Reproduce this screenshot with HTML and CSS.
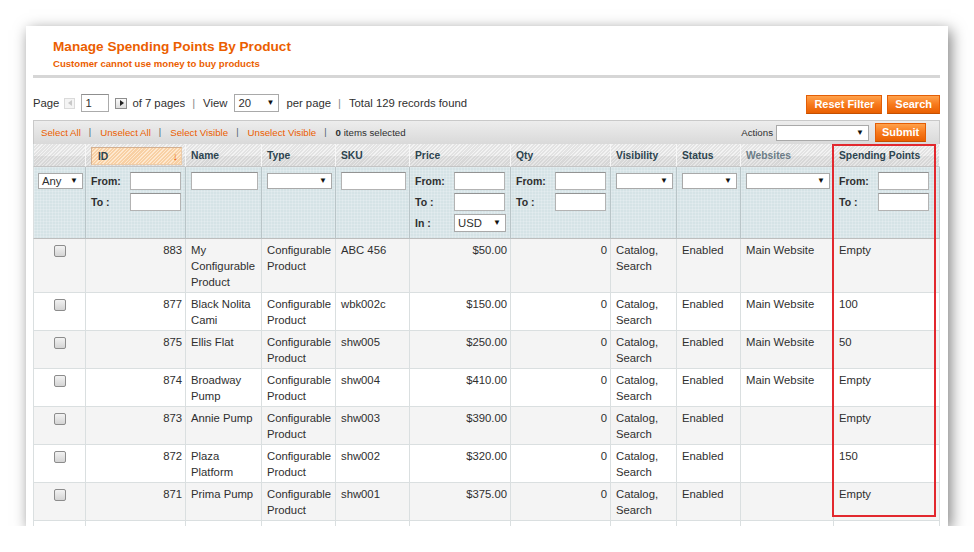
FILE: index.html
```html
<!DOCTYPE html>
<html>
<head>
<meta charset="utf-8">
<title>Manage Spending Points By Product</title>
<link rel="stylesheet" href="styles.css">
</head>
<body>
<div class="stage">
  <div class="card">
    <div class="content-header">
      <h3 class="title">Manage Spending Points By Product</h3>
      <p class="subtitle">Customer cannot use money to buy products</p>
    </div>

    <div class="pager">
      <div class="pager-left">
        <span>Page</span>
        <span class="arrow prev"><i></i></span>
        <span class="page-input">1</span>
        <span class="arrow next"><i></i></span>
        <span class="gap5">of 7 pages</span>
        <span class="sep">|</span>
        <span>View</span>
        <span class="sel sel-view">20<b>▼</b></span>
        <span class="gap7">per page</span>
        <span class="sep">|</span>
        <span>Total 129 records found</span>
      </div>
      <div class="pager-right">
        <button class="btn">Reset Filter</button>
        <button class="btn">Search</button>
      </div>
    </div>

    <div class="massaction">
      <div class="ma-left">
        <a class="ma-link">Select All</a><span class="ma-sep">|</span>
        <a class="ma-link">Unselect All</a><span class="ma-sep">|</span>
        <a class="ma-link">Select Visible</a><span class="ma-sep">|</span>
        <a class="ma-link">Unselect Visible</a><span class="ma-sep">|</span>
        <span class="ma-count"><strong>0</strong> items selected</span>
      </div>
      <div class="ma-right">
        <span class="ma-label">Actions</span>
        <span class="sel sel-actions"><b>▼</b></span>
        <button class="btn btn-submit">Submit</button>
      </div>
    </div>

    <div class="grid">
      <table class="data">
        <colgroup>
          <col style="width:53px"><col style="width:100px"><col style="width:76px"><col style="width:74px">
          <col style="width:74px"><col style="width:101px"><col style="width:100px"><col style="width:66px">
          <col style="width:64px"><col style="width:93px"><col style="width:106px">
        </colgroup>
        <thead>
          <tr class="headings">
            <th></th>
            <th class="sorted"><span class="sort-box"><span>ID</span><span class="sort-arrow">↓</span></span></th>
            <th>Name</th>
            <th>Type</th>
            <th>SKU</th>
            <th>Price</th>
            <th>Qty</th>
            <th>Visibility</th>
            <th>Status</th>
            <th class="nosort">Websites</th>
            <th>Spending Points</th>
          </tr>
          <tr class="filter">
            <td class="cb-cell"><span class="sel sel-any">Any<b>▼</b></span></td>
            <td>
              <div class="range"><label>From:</label><input class="txt" type="text"></div>
              <div class="range"><label>To :</label><input class="txt" type="text"></div>
            </td>
            <td><input class="txt full" type="text"></td>
            <td><span class="sel sel-full"><b>▼</b></span></td>
            <td><input class="txt full" type="text"></td>
            <td>
              <div class="range"><label>From:</label><input class="txt" type="text"></div>
              <div class="range"><label>To :</label><input class="txt" type="text"></div>
              <div class="range"><label>In :</label><span class="sel sel-usd">USD<b>▼</b></span></div>
            </td>
            <td>
              <div class="range"><label>From:</label><input class="txt" type="text"></div>
              <div class="range"><label>To :</label><input class="txt" type="text"></div>
            </td>
            <td><span class="sel sel-full"><b>▼</b></span></td>
            <td><span class="sel sel-full"><b>▼</b></span></td>
            <td><span class="sel sel-full"><b>▼</b></span></td>
            <td>
              <div class="range"><label>From:</label><input class="txt" type="text"></div>
              <div class="range"><label>To :</label><input class="txt" type="text"></div>
            </td>
          </tr>
        </thead>
        <tbody>
          <tr class="odd">
            <td class="cb-cell"><span class="cb"></span></td>
            <td class="num">883</td><td>My Configurable Product</td><td>Configurable Product</td><td>ABC 456</td>
            <td class="num">$50.00</td><td class="num">0</td><td>Catalog, Search</td><td>Enabled</td><td>Main Website</td><td>Empty</td>
          </tr>
          <tr>
            <td class="cb-cell"><span class="cb"></span></td>
            <td class="num">877</td><td>Black Nolita Cami</td><td>Configurable Product</td><td>wbk002c</td>
            <td class="num">$150.00</td><td class="num">0</td><td>Catalog, Search</td><td>Enabled</td><td>Main Website</td><td>100</td>
          </tr>
          <tr class="odd">
            <td class="cb-cell"><span class="cb"></span></td>
            <td class="num">875</td><td>Ellis Flat</td><td>Configurable Product</td><td>shw005</td>
            <td class="num">$250.00</td><td class="num">0</td><td>Catalog, Search</td><td>Enabled</td><td>Main Website</td><td>50</td>
          </tr>
          <tr>
            <td class="cb-cell"><span class="cb"></span></td>
            <td class="num">874</td><td>Broadway Pump</td><td>Configurable Product</td><td>shw004</td>
            <td class="num">$410.00</td><td class="num">0</td><td>Catalog, Search</td><td>Enabled</td><td>Main Website</td><td>Empty</td>
          </tr>
          <tr class="odd">
            <td class="cb-cell"><span class="cb"></span></td>
            <td class="num">873</td><td>Annie Pump</td><td>Configurable Product</td><td>shw003</td>
            <td class="num">$390.00</td><td class="num">0</td><td>Catalog, Search</td><td>Enabled</td><td></td><td>Empty</td>
          </tr>
          <tr>
            <td class="cb-cell"><span class="cb"></span></td>
            <td class="num">872</td><td>Plaza Platform</td><td>Configurable Product</td><td>shw002</td>
            <td class="num">$320.00</td><td class="num">0</td><td>Catalog, Search</td><td>Enabled</td><td></td><td>150</td>
          </tr>
          <tr class="odd">
            <td class="cb-cell"><span class="cb"></span></td>
            <td class="num">871</td><td>Prima Pump</td><td>Configurable Product</td><td>shw001</td>
            <td class="num">$375.00</td><td class="num">0</td><td>Catalog, Search</td><td>Enabled</td><td></td><td>Empty</td>
          </tr>
          <tr class="partial">
            <td></td><td></td><td></td><td></td><td></td><td></td><td></td><td></td><td></td><td></td><td></td>
          </tr>
        </tbody>
      </table>
      <div class="highlight"></div>
    </div>
  </div>
</div>
</body>
</html>
```

FILE: styles.css
```css
* { box-sizing: border-box; }
html, body { margin: 0; padding: 0; background: #fff; }
body {
  font-family: "Liberation Sans", Arial, sans-serif;
  font-size: 11.3px;
  color: #2f2f2f;
}

.stage { padding: 26px 0 0 26px; }

.card {
  width: 922px;
  height: 500px;
  background: #fff;
  box-shadow: 3px 4px 14px rgba(0, 0, 0, 0.5);
  padding: 0 8px 0 7px;
  overflow: hidden;
}

/* header */
.content-header {
  padding: 12px 0 5px 20px;
  border-bottom: 3px solid #d6d6d6;
}
.title {
  margin: 0;
  font-size: 13.6px;
  line-height: 17px;
  font-weight: bold;
  color: #eb5e00;
}
.subtitle {
  margin: 3px 0 0;
  font-size: 9.6px;
  line-height: 12px;
  font-weight: bold;
  color: #eb5e00;
}

/* pager */
.pager {
  display: flex;
  justify-content: space-between;
  align-items: center;
  height: 19px;
  margin: 17px 0 6px;
}
.pager-left { display: flex; align-items: center; white-space: nowrap; margin-bottom: 3px; }
.pager-right { display: flex; align-items: center; }
.sep { color: #8a8a8a; margin: 0 8px 0 7px; }
.gap5 { margin-left: 5px; }
.gap7 { margin-left: 7px; }

.arrow {
  display: flex;
  align-items: center;
  justify-content: center;
  width: 12px;
  height: 11px;
  border: 1px solid #8e8e8e;
  background: linear-gradient(#fafafa, #dcdcdc);
}
.arrow.prev {
  margin-left: 5px;
  width: 11px;
  border-color: #dadada;
  background: #f4f4f4;
}
.arrow.next { margin-left: 6px; }
.arrow i {
  display: block;
  width: 0; height: 0;
  border-top: 3px solid transparent;
  border-bottom: 3px solid transparent;
}
.arrow.next i { border-left: 4px solid #222; margin-left: 1px; }
.arrow.prev i { border-right: 4px solid #c8c8c8; }

.page-input {
  margin-left: 6px;
  width: 28px;
  height: 18px;
  border: 1px solid #ababab;
  border-top-color: #8f8f8f;
  background: #fff;
  padding-left: 3px;
  line-height: 16px;
  font-size: 11.3px;
}

.sel {
  display: flex;
  justify-content: space-between;
  align-items: center;
  height: 16px;
  border: 1px solid #a9a9a9;
  background: #fff;
  padding: 0 4px 0 3px;
  font-size: 11.3px;
  color: #2f2f2f;
  line-height: 14px;
}
.sel b { font-size: 8px; font-weight: normal; color: #111; margin-left: auto; }
.sel-view { width: 45px; height: 18px; margin-left: 7px; }
.sel-actions { width: 93px; margin-left: 3px; }
.sel-any { width: 45px; margin-top: 1px; }
.sel-full { width: 100%; margin-top: 1px; }
.sel-usd { width: 52px; height: 18px; }

.btn {
  height: 19px;
  padding: 0 7px;
  margin-left: 5px;
  border: 1px solid #e35e06;
  border-bottom-color: #c44f00;
  background: linear-gradient(#ffa24c, #f7791c 50%, #e95f00);
  color: #fff;
  font-family: "Liberation Sans", Arial, sans-serif;
  font-size: 11px;
  font-weight: bold;
  line-height: 17px;
  cursor: pointer;
}

/* massaction */
.massaction {
  display: flex;
  justify-content: space-between;
  align-items: center;
  height: 24px;
  border: 1px solid #c9c9c9;
  border-bottom: 0;
  background: linear-gradient(#ededed, #d9d9d9);
  padding: 0 13px 0 7px;
  font-size: 9.7px;
}
.ma-left { display: flex; align-items: center; white-space: nowrap; margin-bottom: 1px; }
.ma-link { color: #eb5e00; }
.ma-sep { color: #4b5d66; margin: 0 9px 0 8px; font-size: 9px; }
.ma-count { color: #2f2f2f; }
.ma-right { display: flex; align-items: center; }
.ma-label { color: #2f2f2f; margin-bottom: 1px; }
.btn-submit { margin-left: 6px; padding: 0 6px; width: 51px; }

/* grid */
.grid { position: relative; }
.data {
  width: 907px;
  table-layout: fixed;
  border-collapse: separate;
  border-spacing: 0;
}
.data th, .data td {
  border-right: 1px solid #dadfe0;
  border-bottom: 1px solid #dadfe0;
  padding: 3px 3px 2px 5px;
  text-align: left;
  vertical-align: top;
  line-height: 16px;
  font-weight: normal;
}
.data tr > :first-child { border-left: 1px solid #dadfe0; }

.headings { height: 23px; }
.headings th {
  padding: 1px 3px 0 5px;
  vertical-align: middle;
  line-height: 21px;
  font-size: 10.3px;
  font-weight: bold;
  color: #2d444f;
  white-space: nowrap;
  border-right-color: #f7f7f7;
  border-bottom-color: #c4c4c4;
  background:
    linear-gradient(rgba(255,255,255,0) 55%, rgba(0,0,0,0.05) 55%),
    repeating-linear-gradient(-45deg, #f3f3f3 0 1px, #e3e3e3 1px 2.5px);
}
.headings th.nosort { color: #6b7c86; }
.headings th.sorted { padding: 3px 3px 1px 5px; }
.sort-box {
  display: flex;
  justify-content: space-between;
  height: 18px;
  line-height: 17px;
  padding: 0 3px 0 6px;
  border: 1px solid #d4b090;
  border-right-color: #eacbaa;
  border-bottom-color: #eacbaa;
  background: repeating-linear-gradient(-45deg, #fee8cf 0 1px, #f8d0a4 1px 2.5px);
}
.sort-arrow { color: #eb5e00; font-weight: normal; font-size: 11px; }

.filter { height: 72px; }
.filter td {
  padding: 5px 3px 0 5px;
  background-color: #d5e3e6;
  background-image:
    linear-gradient(rgba(255,255,255,0.18) 1px, transparent 1px),
    linear-gradient(90deg, rgba(255,255,255,0.18) 1px, transparent 1px);
  background-size: 3px 3px;
  border-right-color: #b9c5c8;
  border-bottom-color: #bdbdbd;
}
.filter > :first-child { border-left-color: #b9c5c8; }
.filter td.cb-cell { padding-left: 4px; }

.range {
  display: flex;
  align-items: center;
  height: 18px;
  margin-bottom: 3px;
}
.range label {
  width: 39px;
  flex: none;
  font-size: 10.5px;
  font-weight: bold;
  color: #2f2f2f;
}
.txt {
  display: block;
  width: 51px;
  height: 18px;
  margin: 0;
  padding: 0 2px;
  border: 1px solid #b3b3b3;
  border-top-color: #939393;
  background: #fff;
  font-family: "Liberation Sans", Arial, sans-serif;
  font-size: 11.3px;
  outline: none;
}
.txt.full { width: 100%; }

tbody td { background: #fff; color: #2f2f2f; }
tbody tr.odd td { background: #f4f4f4; }
tbody tr.partial td { height: 38px; }
.data td.num { text-align: right; }
.data tbody td.cb-cell { padding: 3px 4px 2px 4px; }
.cb {
  display: block;
  width: 12px;
  height: 12px;
  margin: 3px auto 0;
  border: 1px solid #8c8c8c;
  border-radius: 2px;
  background: linear-gradient(#f2f2f2, #d4d4d4);
}

.highlight {
  position: absolute;
  left: 799px;
  top: 0;
  width: 104px;
  height: 373px;
  border: 2px solid #e2282e;
  pointer-events: none;
}
```
